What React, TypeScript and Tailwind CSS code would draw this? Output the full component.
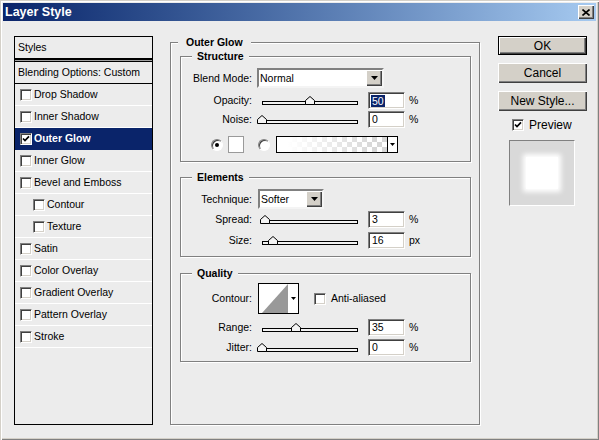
import React from "react";

function Check({ checked }: { checked?: boolean }) {
  return (
    <span className="w-[12px] h-[12px] shrink-0 bg-white border border-t-[#808080] border-l-[#808080] border-r-white border-b-white shadow-[inset_1px_1px_0_#404040,inset_-1px_-1px_0_#d4d0c8] flex items-center justify-center">
      {checked && (
        <svg width="8" height="8" viewBox="0 0 8 8">
          <path d="M1 3.5 L3 5.6 L7 1.4" stroke="#000" strokeWidth="1.7" fill="none" />
        </svg>
      )}
    </span>
  );
}

function Radio({ checked }: { checked?: boolean }) {
  return (
    <span className="w-[12px] h-[12px] shrink-0 rounded-full bg-white border border-t-[#808080] border-l-[#808080] border-r-white border-b-white shadow-[inset_1px_1px_0_#404040] flex items-center justify-center">
      {checked && <span className="w-[4px] h-[4px] rounded-full bg-black" />}
    </span>
  );
}

function Slider({ pct }: { pct: number }) {
  return (
    <div className="relative w-[96px] h-[9px] flex items-end shrink-0">
      <div className="w-full h-[4px] bg-[#f2f2f2] border border-black" />
      <svg
        className="absolute top-0"
        style={{ left: `calc(${pct}% - 5px)` }}
        width="10"
        height="9"
        viewBox="0 0 10 9"
      >
        <path d="M5 0.5 L9.5 4.5 L9.5 8.5 L0.5 8.5 L0.5 4.5 Z" fill="#f4f4f4" stroke="#000" />
      </svg>
    </div>
  );
}

function NumInput({ value, selected }: { value: string; selected?: boolean }) {
  return (
    <div className="w-[37px] h-[17px] shrink-0 bg-white border border-t-[#808080] border-l-[#808080] border-r-white border-b-white shadow-[inset_1px_1px_0_#404040,inset_-1px_-1px_0_#d4d0c8] flex items-center pl-[2px]">
      {selected ? <span className="bg-[#0a246a] text-white px-[1px] leading-[12px]">{value}</span> : <span className="pl-[1px]">{value}</span>}
    </div>
  );
}

function Arrow() {
  return (
    <svg width="7" height="4" viewBox="0 0 7 4">
      <path d="M0 0 H7 L3.5 4 Z" fill="#000" />
    </svg>
  );
}

function DropBtn() {
  return (
    <span className="w-[16px] h-[16px] shrink-0 bg-[#d4d0c8] shadow-[inset_1px_1px_0_#fff,inset_-1px_-1px_0_#404040,inset_-2px_-2px_0_#808080] flex items-center justify-center">
      <Arrow />
    </span>
  );
}

function SliderRow({
  label,
  pct,
  value,
  unit,
  selected,
  className,
}: {
  label: string;
  pct: number;
  value: string;
  unit: string;
  selected?: boolean;
  className?: string;
}) {
  return (
    <div className={`flex items-center h-[17px] ${className ?? ""}`}>
      <span className="w-[71px] text-right">{label}</span>
      <div className="ml-[10px]">
        <Slider pct={pct} />
      </div>
      <div className="ml-[10px]">
        <NumInput value={value} selected={selected} />
      </div>
      <span className="ml-[4px]">{unit}</span>
    </div>
  );
}

function Group({
  title,
  className,
  children,
}: {
  title: string;
  className?: string;
  children?: React.ReactNode;
}) {
  return (
    <fieldset className={`border border-[#808080] shadow-[inset_1px_1px_0_#fff,1px_1px_0_#fff] ${className ?? ""}`}>
      <legend className="ml-[11px] font-bold leading-[13px] px-[5px] bg-[#ececec]">{title}</legend>
      {children}
    </fieldset>
  );
}

function ListRow({
  label,
  checked,
  selected,
  indent,
}: {
  label: string;
  checked?: boolean;
  selected?: boolean;
  indent?: boolean;
}) {
  return (
    <div
      className={`h-[22px] shrink-0 border-b flex items-center ${indent ? "pl-[18px]" : "pl-[5px]"} ${
        selected ? "bg-[#0a246a] text-white font-bold border-[#0a246a]" : "border-white"
      }`}
    >
      <Check checked={checked} />
      <span className="ml-[2px]">{label}</span>
    </div>
  );
}

function Btn({ children, def }: { children: React.ReactNode; def?: boolean }) {
  if (def) {
    return (
      <div className="h-[19px] border border-black">
        <div className="h-full bg-[#d4d0c8] shadow-[inset_1px_1px_0_#fff,inset_-1px_-1px_0_#404040,inset_-2px_-2px_0_#808080] flex items-center justify-center">
          {children}
        </div>
      </div>
    );
  }
  return (
    <div className="h-[20px] bg-[#d4d0c8] shadow-[inset_1px_1px_0_#fff,inset_-1px_-1px_0_#404040,inset_-2px_-2px_0_#808080] flex items-center justify-center">
      {children}
    </div>
  );
}

export default function App() {
  return (
    <div className="w-[599px] h-[440px] overflow-hidden bg-[#ececec] font-['Liberation_Sans',Arial,sans-serif] text-[10.5px] leading-[13px] text-black flex flex-col shadow-[inset_1px_1px_0_#d4d0c8,inset_2px_2px_0_#fff,inset_-1px_-1px_0_#808080,inset_-2px_-2px_0_#d4d0c8]">
      {/* Title bar */}
      <div className="mx-[3px] mt-[3px] h-[18px] shrink-0 bg-linear-to-r from-[#0a246a] to-[#a6caf0] flex items-center justify-between">
        <span className="pl-[2px] text-white font-bold text-[12.5px]">Layer Style</span>
        <span className="w-[16px] h-[14px] mr-[2px] bg-[#d4d0c8] shadow-[inset_1px_1px_0_#fff,inset_-1px_-1px_0_#404040,inset_-2px_-2px_0_#808080] flex items-center justify-center">
          <svg width="8" height="7" viewBox="0 0 8 7">
            <path d="M0.5 0.5 L7.5 6.5 M7.5 0.5 L0.5 6.5" stroke="#000" strokeWidth="1.6" />
          </svg>
        </span>
      </div>

      {/* Body */}
      <div className="flex pt-[15px]">
        {/* Styles list */}
        <div className="ml-[14px] w-[139px] h-[389px] shrink-0 border border-black flex flex-col">
          <div className="h-[21px] shrink-0 flex items-center pl-[3px]">Styles</div>
          <div className="h-[4px] shrink-0 border-t-2 border-b border-black bg-[#a0a0a0]" />
          <div className="h-[22px] shrink-0 flex items-center pl-[3px] border-b border-black">
            Blending Options: Custom
          </div>
          <ListRow label="Drop Shadow" />
          <ListRow label="Inner Shadow" />
          <ListRow label="Outer Glow" checked selected />
          <ListRow label="Inner Glow" />
          <ListRow label="Bevel and Emboss" />
          <ListRow label="Contour" indent />
          <ListRow label="Texture" indent />
          <ListRow label="Satin" />
          <ListRow label="Color Overlay" />
          <ListRow label="Gradient Overlay" />
          <ListRow label="Pattern Overlay" />
          <ListRow label="Stroke" />
        </div>

        {/* Main panel */}
        <fieldset className="ml-[17px] w-[310px] h-[389px] shrink-0 border border-[#808080] shadow-[inset_1px_1px_0_#fff,1px_1px_0_#fff]">
          <legend className="ml-[7px] px-[8px] font-bold leading-[13px] bg-[#ececec]">Outer Glow</legend>

          <Group title="Structure" className="mt-[1px] ml-[9px] w-[291px] h-[112px]">
            <div className="flex items-center h-[20px] mt-[5px]">
              <span className="w-[71px] text-right">Blend Mode:</span>
              <div className="ml-[5px] w-[127px] h-[20px] bg-white border-2 border-t-[#808080] border-l-[#808080] border-r-[#f4f4f4] border-b-[#f4f4f4] flex items-center">
                <span className="flex-1 pl-[1px]">Normal</span>
                <DropBtn />
              </div>
            </div>
            <SliderRow label="Opacity:" pct={50} value="50" unit="%" selected className="mt-[4px]" />
            <SliderRow label="Noise:" pct={0} value="0" unit="%" className="mt-[2px]" />
            <div className="flex items-center h-[17px] mt-[8px]">
              <span className="ml-[30px]">
                <Radio checked />
              </span>
              <span className="ml-[5px] w-[16px] h-[17px] bg-white border border-[#9a9a9a]" />
              <span className="ml-[14px]">
                <Radio />
              </span>
              <div className="ml-[6px] w-[122px] h-[17px] border border-black flex">
                <div className="flex-1 [background-image:linear-gradient(to_right,#fff_10%,rgba(255,255,255,0)_90%),repeating-conic-gradient(#d6d6d6_0_25%,#fff_0_50%)] [background-size:100%_100%,10px_10px]" />
                <div className="w-[10px] border-l border-black bg-white flex items-center justify-center">
                  <svg width="5" height="3" viewBox="0 0 5 3">
                    <path d="M0 0 H5 L2.5 3 Z" fill="#000" />
                  </svg>
                </div>
              </div>
            </div>
          </Group>

          <Group title="Elements" className="mt-[9px] ml-[9px] w-[291px] h-[86px]">
            <div className="flex items-center h-[20px] mt-[5px]">
              <span className="w-[71px] text-right">Technique:</span>
              <div className="ml-[6px] w-[66px] h-[20px] bg-white border-2 border-t-[#808080] border-l-[#808080] border-r-[#f4f4f4] border-b-[#f4f4f4] flex items-center">
                <span className="flex-1 pl-[1px]">Softer</span>
                <DropBtn />
              </div>
            </div>
            <SliderRow label="Spread:" pct={3} value="3" unit="%" className="mt-[2px]" />
            <SliderRow label="Size:" pct={11.5} value="16" unit="px" className="mt-[4px]" />
          </Group>

          <Group title="Quality" className="mt-[10px] ml-[9px] w-[291px] h-[95px]">
            <div className="flex items-center h-[31px] mt-[3px]">
              <span className="w-[71px] text-right">Contour:</span>
              <div className="ml-[6px] w-[41px] h-[31px] border border-black bg-white flex">
                <svg width="29" height="29" viewBox="0 0 29 29" className="shrink-0">
                  <polygon points="3,29 29,0 29,29" fill="#999999" />
                </svg>
                <div className="flex-1 flex items-center justify-center">
                  <svg width="5" height="3" viewBox="0 0 5 3">
                    <path d="M0 0 H5 L2.5 3 Z" fill="#000" />
                  </svg>
                </div>
              </div>
              <span className="ml-[15px]">
                <Check />
              </span>
              <span className="ml-[5px]">Anti-aliased</span>
            </div>
            <SliderRow label="Range:" pct={35} value="35" unit="%" className="mt-[5px]" />
            <SliderRow label="Jitter:" pct={0} value="0" unit="%" className="mt-[3px]" />
          </Group>
        </fieldset>

        {/* Right column */}
        <div className="ml-[18px] w-[89px] shrink-0 flex flex-col text-[12px] leading-[14px]">
          <Btn def>OK</Btn>
          <div className="mt-[8px]">
            <Btn>Cancel</Btn>
          </div>
          <div className="mt-[8px]">
            <Btn>New Style...</Btn>
          </div>
          <div className="mt-[8px] h-[12px] flex items-center pl-[14px]">
            <Check checked />
            <span className="ml-[5px]">Preview</span>
          </div>
          <div className="mt-[9px] ml-[11px] w-[66px] h-[66px] bg-[#d9d9d9] border border-t-[#808080] border-l-[#808080] border-r-white border-b-white flex items-center justify-center">
            <div className="w-[32px] h-[32px] bg-white shadow-[0_0_5px_3px_#fff]" />
          </div>
        </div>
      </div>
    </div>
  );
}
